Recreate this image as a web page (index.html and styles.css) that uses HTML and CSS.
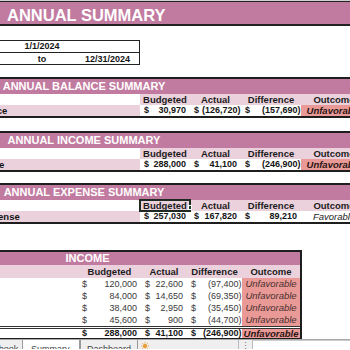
FILE: index.html
```html
<!DOCTYPE html>
<html>
<head>
<meta charset="utf-8">
<link rel="stylesheet" href="styles.css">
</head>
<body>
<div class="sheet">
  <div class="topline"></div>
  <div class="title-band">ANNUAL SUMMARY</div>

  <div class="dates">
    <div class="drow"><div class="d1">1/1/2024</div><div class="d2"></div></div>
    <div class="drow drow2"><div class="d1">to</div><div class="d2">12/31/2024</div></div>
  </div>

  <section class="sum s-balance">
    <div class="band"><span class="band-title">ANNUAL BALANCE SUMMARY</span></div>
    <div class="srow hdr">
      <div class="blank"></div>
      <div class="h">Budgeted</div>
      <div class="h">Actual</div>
      <div class="h">Difference</div>
      <div class="h">Outcome</div>
    </div>
    <div class="srow data">
      <div class="lab ind-bal">Net Balance</div>
      <div class="acc"><span>$</span><span class="pos">30,970</span></div>
      <div class="acc"><span>$</span><span class="neg">(126,720)</span></div>
      <div class="acc"><span>$</span><span class="neg">(157,690)</span></div>
      <div class="out bad">Unfavorable</div>
    </div>
  </section>

  <section class="sum s-income">
    <div class="band"><span class="band-title">ANNUAL INCOME SUMMARY</span></div>
    <div class="srow hdr">
      <div class="blank"></div>
      <div class="h">Budgeted</div>
      <div class="h">Actual</div>
      <div class="h">Difference</div>
      <div class="h">Outcome</div>
    </div>
    <div class="srow data">
      <div class="lab ind-inc">Net Income</div>
      <div class="acc"><span>$</span><span class="pos">288,000</span></div>
      <div class="acc"><span>$</span><span class="pos">41,100</span></div>
      <div class="acc"><span>$</span><span class="neg">(246,900)</span></div>
      <div class="out bad">Unfavorable</div>
    </div>
  </section>

  <section class="sum s-expense">
    <div class="band"><span class="band-title">ANNUAL EXPENSE SUMMARY</span></div>
    <div class="srow hdr">
      <div class="blank"></div>
      <div class="h sel">Budgeted<span class="selbox"><span class="handle"></span></span></div>
      <div class="h">Actual</div>
      <div class="h">Difference</div>
      <div class="h">Outcome</div>
    </div>
    <div class="srow data">
      <div class="lab ind-exp">Total Expense</div>
      <div class="acc"><span>$</span><span class="pos">257,030</span></div>
      <div class="acc"><span>$</span><span class="pos">167,820</span></div>
      <div class="acc"><span>$</span><span class="pos">89,210</span></div>
      <div class="out good">Favorable</div>
    </div>
  </section>

  <section class="inc">
    <div class="iband"><span class="iband-title">INCOME</span></div>
    <div class="irow ihdr">
      <div class="blank"></div>
      <div class="h">Budgeted</div>
      <div class="h">Actual</div>
      <div class="h">Difference</div>
      <div class="h">Outcome</div>
    </div>
    <div class="irow idata">
      <div class="ilab"></div>
      <div class="acc"><span>$</span><span class="pos">120,000</span></div>
      <div class="acc"><span>$</span><span class="pos">22,600</span></div>
      <div class="acc"><span>$</span><span class="neg">(97,400)</span></div>
      <div class="out bad">Unfavorable</div>
    </div>
    <div class="irow idata">
      <div class="ilab"></div>
      <div class="acc"><span>$</span><span class="pos">84,000</span></div>
      <div class="acc"><span>$</span><span class="pos">14,650</span></div>
      <div class="acc"><span>$</span><span class="neg">(69,350)</span></div>
      <div class="out bad">Unfavorable</div>
    </div>
    <div class="irow idata">
      <div class="ilab"></div>
      <div class="acc"><span>$</span><span class="pos">38,400</span></div>
      <div class="acc"><span>$</span><span class="pos">2,950</span></div>
      <div class="acc"><span>$</span><span class="neg">(35,450)</span></div>
      <div class="out bad">Unfavorable</div>
    </div>
    <div class="irow idata">
      <div class="ilab"></div>
      <div class="acc"><span>$</span><span class="pos">45,600</span></div>
      <div class="acc"><span>$</span><span class="pos">900</span></div>
      <div class="acc"><span>$</span><span class="neg">(44,700)</span></div>
      <div class="out bad">Unfavorable</div>
    </div>
    <div class="irow itotal">
      <div class="ilab"></div>
      <div class="acc"><span>$</span><span class="pos">288,000</span></div>
      <div class="acc"><span>$</span><span class="pos">41,100</span></div>
      <div class="acc"><span>$</span><span class="neg">(246,900)</span></div>
      <div class="out bad">Unfavorable</div>
    </div>
  </section>

  <div class="tabs">
    <div class="tab t1">Workbook</div>
    <div class="tab t2">Summary</div>
    <div class="tab t3">Dashboard</div>
    <div class="tab t4"><svg width="8" height="8" viewBox="0 0 8 8"><circle cx="4" cy="4" r="2.2" fill="#e8a13a"/><path d="M4 0v1.3M4 6.7V8M0 4h1.3M6.7 4H8M1.2 1.2l.9.9M5.9 5.9l.9.9M6.8 1.2l-.9.9M2.1 5.9l-.9.9" stroke="#e8a13a" stroke-width="0.9"/></svg></div>
    <div class="tabfill"></div>
    <div class="split">⋮</div>
    <div class="hscroll"></div>
  </div>
</div>
</body>
</html>
```

FILE: styles.css
```css
* { box-sizing: border-box; margin: 0; padding: 0; }
html, body { width: 350px; height: 350px; overflow: hidden; background: #fff; }
body { font-family: "Liberation Sans", Arial, sans-serif; color: #151515; }

.sheet { display: flex; flex-direction: column; width: 350px; height: 350px; overflow: hidden; }

.topline { flex: none; height: 1px; background: #cfcfcf; }

.title-band {
  flex: none;
  height: 25px;
  border-top: 1px solid #222;
  border-bottom: 2px solid #222;
  background: #c27ba0;
  color: #fff;
  font-weight: bold;
  font-size: 16.5px;
  line-height: 18px;
  padding: 4px 0 0 7px;
  white-space: nowrap;
}

/* date box */
.dates {
  flex: none;
  margin-top: 14px;
  margin-left: -2px;
  width: 142px;
  border: 1px solid #222;
  font-size: 9px;
  font-weight: bold;
}
.drow { display: flex; height: 11px; line-height: 11px; }
.drow2 { border-top: 1px solid #222; height: 12px; line-height: 12px; }
.d1 { width: 86px; text-align: center; }
.d2 { flex: 1; text-align: right; padding-right: 9px; }

/* summary sections */
.sum {
  flex: none;
  border-top: 2px solid #1e1e1e;
  border-bottom: 2px solid #1e1e1e;
  width: 367px;
  font-size: 9px;
}
.s-balance { margin-top: 12px; }
.s-income { margin-top: 13px; }
.s-expense { margin-top: 11px; }

.band {
  height: 15px;
  background: #c27ba0;
  color: #fff;
  font-weight: bold;
  font-size: 11px;
  line-height: 15px;
}
.band-title { display: block; width: 168px; text-align: center; white-space: nowrap; }

.srow { display: grid; grid-template-columns: 140px 50px 51px 60px 66px; }
.hdr { height: 11px; line-height: 11px; background: #ead1dc; font-size: 9.5px; }
.hdr .blank { background: #fff; }
.data { height: 11px; line-height: 11px; font-weight: bold; }

.h { font-weight: bold; text-align: center; color: #1c1c1c; white-space: nowrap; }

.lab {
  background: #ead1dc;
  font-weight: bold;
  font-size: 9.5px;
  white-space: nowrap;
}
.ind-bal { text-indent: -47px; }
.ind-inc { text-indent: -47px; }
.ind-exp { text-indent: -44px; }

.acc {
  display: flex;
  justify-content: space-between;
  padding-left: 4px;
  white-space: nowrap;
}
.pos { padding-right: 4px; }
.neg { padding-right: 0.5px; }

.out { text-align: center; font-style: italic; white-space: nowrap; font-size: 9.5px; }
.out.bad { background: #e99a96; }
.sum .out.bad { font-weight: bold; color: #2a1414; }
.sum .out.good { font-weight: normal; color: #1c1c1c; }

.sel { position: relative; }
.selbox {
  position: absolute;
  left: -1px; top: -1px; right: -1px; bottom: -1px;
  border: 2px solid #1f2a22;
}
.handle {
  position: absolute;
  right: -3px; bottom: 0px;
  width: 4px; height: 5px;
  background: #1f3a28;
  border: 1px solid #fff;
}

/* INCOME table */
.inc {
  flex: none;
  margin-top: 26px;
  width: 302px;
  border-top: 2px solid #1e1e1e;
  border-right: 2px solid #1e1e1e;
  border-bottom: 1px solid #1e1e1e;
  font-size: 9px;
}
.iband {
  height: 13px;
  background: #c27ba0;
  color: #fff;
  font-weight: bold;
  font-size: 11px;
  line-height: 13px;
}
.iband-title { display: block; width: 175px; text-align: center; }

.irow { display: grid; grid-template-columns: 78px 63px 46px 55px 58px; }
.ihdr { height: 13px; line-height: 13px; background: #ead1dc; font-size: 9.5px; }
.idata { height: 12px; line-height: 12px; color: #3a3a3a; }
.idata .out { color: #4a3030; }
.itotal {
  height: 12px;
  line-height: 9px;
  border-top: 3px double #333;
  font-weight: bold;
  color: #151515;
}
.itotal .out { color: #2a1414; }

/* sheet tabs */
.tabs {
  flex: none;
  height: 10px;
  display: flex;
  background: #efefef;
  border-top: 1px solid #a8a8a8;
  font-size: 9px;
  line-height: 10px;
  color: #444;
}
.tab { white-space: nowrap; overflow: hidden; border-right: 1px solid #9a9a9a; padding-top: 4px; }
.t1 { width: 23px; text-indent: -22px; }
.t2 { width: 57px; padding-left: 8px; background: #fff; }
.t3 { width: 58px; padding-left: 6px; border-left: 1px solid #9a9a9a; }
.t4 { width: 14px; padding: 2px 0 0 3px; border-right: none; }
.tabfill { flex: 1; }
.split { width: 14px; text-align: center; border-left: 1px solid #bbb; color: #777; padding-top: 1px; }
.hscroll { width: 98px; background: #fff; border-left: 1px solid #bbb; border-top: 1px solid #ccc; }
```
